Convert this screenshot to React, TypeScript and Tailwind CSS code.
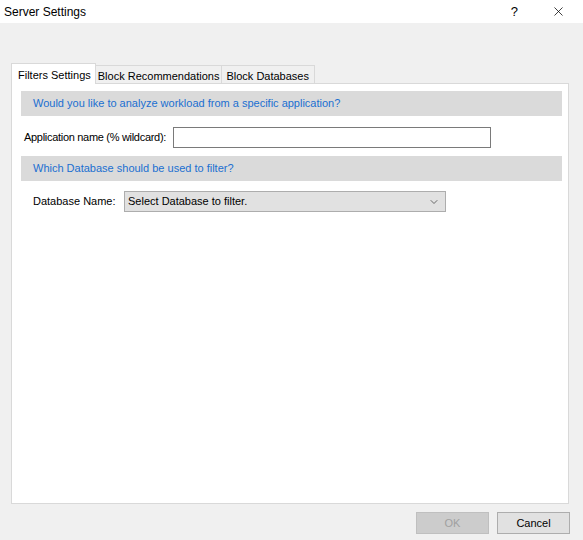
import { ChevronDown, X } from "lucide-react";

const font = { fontFamily: '"Liberation Sans", Arial, sans-serif' };

function Tab({ label, active, pad }: { label: string; active?: boolean; pad?: string }) {
  if (active) {
    return (
      <div className="relative z-10 -mb-px h-[21px] whitespace-nowrap border border-b-0 border-[#d9d9d9] bg-white pl-[6px] pr-[4px] pt-[3px] text-[11px] text-black">
        {label}
      </div>
    );
  }
  return (
    <div
      className={
        "h-[18px] whitespace-nowrap border border-l-0 border-b-0 border-[#d9d9d9] bg-[#f0f0f0] pt-[2px] text-[11px] text-black " +
        (pad ?? "px-[2px]")
      }
    >
      {label}
    </div>
  );
}

function SectionBar({ text }: { text: string }) {
  return (
    <div className="flex h-[25px] items-center bg-[#dadada] pl-[12px] text-[11px] text-[#1a6fd1]">
      {text}
    </div>
  );
}

export default function App() {
  return (
    <div className="flex h-[540px] w-[583px] flex-col bg-[#f0f0f0]" style={font}>
      {/* title bar */}
      <div className="flex h-[23px] items-center bg-white">
        <span className="pl-[4px] text-[12px] text-black">Server Settings</span>
        <span className="ml-auto mr-[33px] text-[13px] text-black">?</span>
        <X className="mr-[17px] h-[15px] w-[15px] text-black" strokeWidth={1.2} />
      </div>

      {/* tabs */}
      <div className="ml-[11px] mt-[40px] flex items-end">
        <Tab label="Filters Settings" active />
        <Tab label="Block Recommendations" />
        <Tab label="Block Databases" pad="pl-[4px] pr-[5px]" />
      </div>

      {/* panel */}
      <div className="ml-[11px] h-[421px] w-[558px] border border-[#d9d9d9] bg-white px-[9px] pt-[7px] pr-[6px]">
        <SectionBar text="Would you like to analyze workload from a specific application?" />

        <div className="mt-[11px] flex items-center">
          <span className="ml-[3px] w-[149px] whitespace-nowrap text-[11px] tracking-[-0.3px] text-black">
            Application name (% wildcard):
          </span>
          <div className="h-[21px] w-[318px] border border-[#7a7a7a] bg-white" />
        </div>

        <div className="mt-[8px]">
          <SectionBar text="Which Database should be used to filter?" />
        </div>

        <div className="mt-[10px] flex items-center">
          <span className="ml-[12px] w-[91px] whitespace-nowrap text-[11px] text-black">Database Name:</span>
          <div className="flex h-[21px] w-[322px] items-center border border-[#adadad] bg-[#e1e1e1] pl-[3px] pr-[5px] text-[11px] text-black">
            <span>Select Database to filter.</span>
            <ChevronDown className="ml-auto h-[12px] w-[12px] text-[#404040]" strokeWidth={1.5} />
          </div>
        </div>
      </div>

      {/* buttons */}
      <div className="mr-[13px] mt-[8px] flex justify-end gap-[8px]">
        <button className="h-[22px] w-[73px] border border-[#bfbfbf] bg-[#cccccc] text-[11px] text-[#a0a0a0]">
          OK
        </button>
        <button className="h-[22px] w-[73px] border border-[#adadad] bg-[#e1e1e1] text-[11px] text-black">
          Cancel
        </button>
      </div>
    </div>
  );
}
